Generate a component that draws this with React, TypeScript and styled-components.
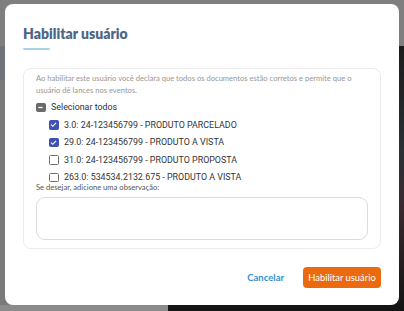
import styled, { createGlobalStyle } from "styled-components";

const Global = createGlobalStyle`
  html, body {
    margin: 0;
    padding: 0;
    width: 404px;
    height: 311px;
    overflow: hidden;
    font-family: "Lato", "Open Sans", sans-serif;
  }
`;

const Page = styled.div`
  width: 404px;
  height: 311px;
  display: flex;
  flex-direction: column;
  background: #7c7c7c;
`;

const Header = styled.div`
  height: 46px;
  background: #7f7f7f;
`;

const Body = styled.div`
  flex: 1;
  display: flex;
`;

const SidePane = styled.div`
  width: 168px;
  display: flex;
  flex-direction: column;
  background: #7a7a7a;
`;

const Band = styled.div<{ $tone: string; $h: number }>`
  height: ${(p) => p.$h}px;
  background: ${(p) => p.$tone};
`;

const MediaPane = styled.div`
  flex: 1;
  background: linear-gradient(180deg, #1c1c1c 0%, #2a3034 40%, #3a2a30 60%, #141414 100%);
`;

const Overlay = styled.div`
  position: fixed;
  inset: 0;
  display: flex;
  align-items: flex-start;
  justify-content: flex-start;
  padding: 4px 0 0 5px;
`;

const Modal = styled.div`
  width: 394px;
  height: 301px;
  box-sizing: border-box;
  background: #fff;
  border-radius: 8px;
  padding: 20px 18px 17px 18px;
  display: flex;
  flex-direction: column;
`;

const Title = styled.h2`
  margin: 0;
  font-size: 14px;
  line-height: 20px;
  font-weight: 800;
  color: #4d6685;
`;

const TitleBar = styled.div`
  width: 27px;
  height: 2px;
  margin-top: 4px;
  background: #a9d3ea;
  border-radius: 1px;
`;

const Card = styled.div`
  margin-top: 18px;
  height: 181px;
  box-sizing: border-box;
  border: 1px solid #ececec;
  border-radius: 8px;
  padding: 3px 12px 8px 12px;
  display: flex;
  flex-direction: column;
`;

const Intro = styled.p`
  margin: 0;
  font-size: 7.6px;
  line-height: 12px;
  color: #979797;
`;

const Row = styled.label<{ $indent?: boolean }>`
  display: flex;
  align-items: center;
  gap: 5.5px;
  height: 17.5px;
  padding-left: ${(p) => (p.$indent ? 13 : 0)}px;
  font-family: "Roboto", sans-serif;
  font-size: 8.9px;
  color: #333;
`;

const SelectAllRow = styled(Row)`
  margin-top: 2.5px;
  font-size: 8.9px;
`;

const Box = styled.span<{ $on?: boolean; $mixed?: boolean }>`
  width: 9.5px;
  height: 9.5px;
  box-sizing: border-box;
  border-radius: 1.5px;
  border: 1.3px solid ${(p) => (p.$on ? "#3f51b5" : p.$mixed ? "#6a6a6a" : "#6e6e6e")};
  background: ${(p) => (p.$on ? "#3f51b5" : p.$mixed ? "#6a6a6a" : "#fff")};
  display: flex;
  align-items: center;
  justify-content: center;
  flex-shrink: 0;
`;

const ObsLabel = styled.div`
  margin-top: -4px;
  font-size: 7.6px;
  line-height: 10px;
  color: #555;
`;

const Note = styled.textarea`
  margin-top: 5px;
  height: 43px;
  box-sizing: border-box;
  border: 1px solid #dcdcdc;
  border-radius: 9px;
  resize: none;
  outline: none;
  font: inherit;
`;

const Footer = styled.div`
  margin-top: auto;
  display: flex;
  justify-content: flex-end;
  align-items: center;
  gap: 19px;
`;

const TextButton = styled.button`
  border: none;
  background: none;
  padding: 0;
  font-family: "Lato", sans-serif;
  font-weight: 700;
  font-size: 9.5px;
  color: #3592d3;
`;

const PrimaryButton = styled.button`
  width: 78px;
  height: 21px;
  border: none;
  border-radius: 4px;
  background: #ec6a0f;
  color: #fff;
  font-family: "Lato", sans-serif;
  font-size: 9.4px;
  padding: 0;
`;

const Check = () => (
  <svg width="7" height="7" viewBox="0 0 10 10">
    <path d="M1.5 5.2 L4 7.6 L8.6 2.6" fill="none" stroke="#fff" strokeWidth="1.6" />
  </svg>
);

const Minus = () => (
  <svg width="7" height="7" viewBox="0 0 10 10">
    <path d="M2 5 H8" stroke="#fff" strokeWidth="1.8" />
  </svg>
);

const items = [
  { label: "3.0: 24-123456799 - PRODUTO PARCELADO", on: true },
  { label: "29.0: 24-123456799 - PRODUTO A VISTA", on: true },
  { label: "31.0: 24-123456799 - PRODUTO PROPOSTA", on: false },
  { label: "263.0: 534534.2132.675 - PRODUTO A VISTA", on: false },
];

export default function App() {
  return (
    <>
      <Global />
      <Page>
        <Header />
        <Body>
          <SidePane>
            <Band $tone="#6e7479" $h={34} />
            <Band $tone="#7a7a7a" $h={225} />
            <Band $tone="#8b8b8b" $h={6} />
          </SidePane>
          <MediaPane />
        </Body>
      </Page>
      <Overlay>
        <Modal>
          <Title>Habilitar usuário</Title>
          <TitleBar />
          <Card>
            <Intro>
              Ao habilitar este usuário você declara que todos os documentos estão corretos e permite que o
              usuário dê lances nos eventos.
            </Intro>
            <SelectAllRow>
              <Box $mixed>
                <Minus />
              </Box>
              Selecionar todos
            </SelectAllRow>
            {items.map((it) => (
              <Row $indent key={it.label}>
                <Box $on={it.on}>{it.on && <Check />}</Box>
                {it.label}
              </Row>
            ))}
            <ObsLabel>Se desejar, adicione uma observação:</ObsLabel>
            <Note />
          </Card>
          <Footer>
            <TextButton>Cancelar</TextButton>
            <PrimaryButton>Habilitar usuário</PrimaryButton>
          </Footer>
        </Modal>
      </Overlay>
    </>
  );
}
